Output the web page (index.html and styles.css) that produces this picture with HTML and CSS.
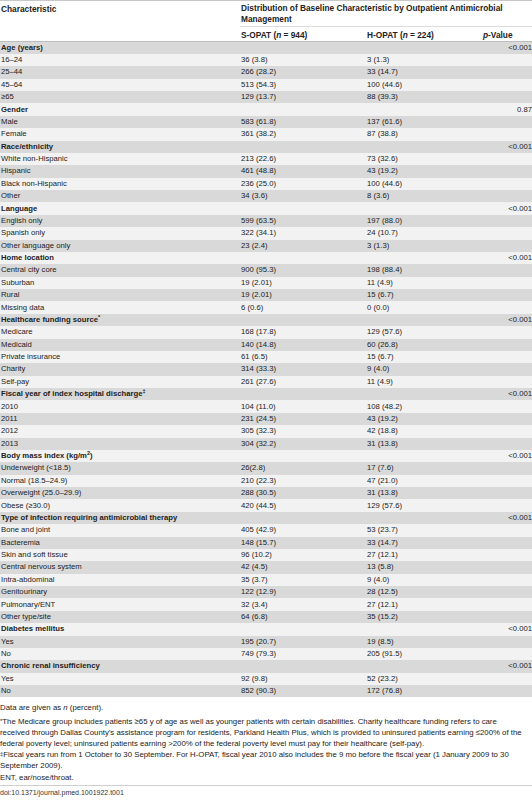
FILE: index.html
```html
<!DOCTYPE html>
<html lang="en">
<head>
    <meta charset="UTF-8">
    <meta name="viewport" content="width=device-width, initial-scale=1.0">
    <title>Table 1. Baseline characteristics</title>
    <link rel="stylesheet" href="styles.css">
</head>
<body>
    <div class="table-wrap">
        <table class="data">
            <thead>
                <tr class="head-top">
                    <th rowspan="2" class="char-col">Characteristic</th>
                    <th colspan="3" class="span-head">Distribution of Baseline Characteristic by Outpatient Antimicrobial Management</th>
                </tr>
                <tr class="head-sub">
                    <th class="num-col">S-OPAT (<i>n</i> = 944)</th>
                    <th class="num-col2">H-OPAT (<i>n</i> = 224)</th>
                    <th class="p-col"><i>p</i>-Value</th>
                </tr>
            </thead>
            <tbody>
                <tr class="group"><td>Age (years)</td><td></td><td></td><td class="p">&lt;0.001</td></tr>
                <tr><td>16–24</td><td>36 (3.8)</td><td>3 (1.3)</td><td></td></tr>
                <tr><td>25–44</td><td>266 (28.2)</td><td>33 (14.7)</td><td></td></tr>
                <tr><td>45–64</td><td>513 (54.3)</td><td>100 (44.6)</td><td></td></tr>
                <tr><td>≥65</td><td>129 (13.7)</td><td>88 (39.3)</td><td></td></tr>

                <tr class="group"><td>Gender</td><td></td><td></td><td class="p">0.87</td></tr>
                <tr><td>Male</td><td>583 (61.8)</td><td>137 (61.6)</td><td></td></tr>
                <tr><td>Female</td><td>361 (38.2)</td><td>87 (38.8)</td><td></td></tr>

                <tr class="group"><td>Race/ethnicity</td><td></td><td></td><td class="p">&lt;0.001</td></tr>
                <tr><td>White non-Hispanic</td><td>213 (22.6)</td><td>73 (32.6)</td><td></td></tr>
                <tr><td>Hispanic</td><td>461 (48.8)</td><td>43 (19.2)</td><td></td></tr>
                <tr><td>Black non-Hispanic</td><td>236 (25.0)</td><td>100 (44.6)</td><td></td></tr>
                <tr><td>Other</td><td>34 (3.6)</td><td>8 (3.6)</td><td></td></tr>

                <tr class="group"><td>Language</td><td></td><td></td><td class="p">&lt;0.001</td></tr>
                <tr><td>English only</td><td>599 (63.5)</td><td>197 (88.0)</td><td></td></tr>
                <tr><td>Spanish only</td><td>322 (34.1)</td><td>24 (10.7)</td><td></td></tr>
                <tr><td>Other language only</td><td>23 (2.4)</td><td>3 (1.3)</td><td></td></tr>

                <tr class="group"><td>Home location</td><td></td><td></td><td class="p">&lt;0.001</td></tr>
                <tr><td>Central city core</td><td>900 (95.3)</td><td>198 (88.4)</td><td></td></tr>
                <tr><td>Suburban</td><td>19 (2.01)</td><td>11 (4.9)</td><td></td></tr>
                <tr><td>Rural</td><td>19 (2.01)</td><td>15 (6.7)</td><td></td></tr>
                <tr><td>Missing data</td><td>6 (0.6)</td><td>0 (0.0)</td><td></td></tr>

                <tr class="group"><td>Healthcare funding source<sup>*</sup></td><td></td><td></td><td class="p">&lt;0.001</td></tr>
                <tr><td>Medicare</td><td>168 (17.8)</td><td>129 (57.6)</td><td></td></tr>
                <tr><td>Medicaid</td><td>140 (14.8)</td><td>60 (26.8)</td><td></td></tr>
                <tr><td>Private insurance</td><td>61 (6.5)</td><td>15 (6.7)</td><td></td></tr>
                <tr><td>Charity</td><td>314 (33.3)</td><td>9 (4.0)</td><td></td></tr>
                <tr><td>Self-pay</td><td>261 (27.6)</td><td>11 (4.9)</td><td></td></tr>

                <tr class="group"><td>Fiscal year of index hospital discharge<sup>‡</sup></td><td></td><td></td><td class="p">&lt;0.001</td></tr>
                <tr><td>2010</td><td>104 (11.0)</td><td>108 (48.2)</td><td></td></tr>
                <tr><td>2011</td><td>231 (24.5)</td><td>43 (19.2)</td><td></td></tr>
                <tr><td>2012</td><td>305 (32.3)</td><td>42 (18.8)</td><td></td></tr>
                <tr><td>2013</td><td>304 (32.2)</td><td>31 (13.8)</td><td></td></tr>

                <tr class="group"><td>Body mass index (kg/m<sup>2</sup>)</td><td></td><td></td><td class="p">&lt;0.001</td></tr>
                <tr><td>Underweight (&lt;18.5)</td><td>26(2.8)</td><td>17 (7.6)</td><td></td></tr>
                <tr><td>Normal (18.5–24.9)</td><td>210 (22.3)</td><td>47 (21.0)</td><td></td></tr>
                <tr><td>Overweight (25.0–29.9)</td><td>288 (30.5)</td><td>31 (13.8)</td><td></td></tr>
                <tr><td>Obese (≥30.0)</td><td>420 (44.5)</td><td>129 (57.6)</td><td></td></tr>

                <tr class="group"><td>Type of infection requiring antimicrobial therapy</td><td></td><td></td><td class="p">&lt;0.001</td></tr>
                <tr><td>Bone and joint</td><td>405 (42.9)</td><td>53 (23.7)</td><td></td></tr>
                <tr><td>Bacteremia</td><td>148 (15.7)</td><td>33 (14.7)</td><td></td></tr>
                <tr><td>Skin and soft tissue</td><td>96 (10.2)</td><td>27 (12.1)</td><td></td></tr>
                <tr><td>Central nervous system</td><td>42 (4.5)</td><td>13 (5.8)</td><td></td></tr>
                <tr><td>Intra-abdominal</td><td>35 (3.7)</td><td>9 (4.0)</td><td></td></tr>
                <tr><td>Genitourinary</td><td>122 (12.9)</td><td>28 (12.5)</td><td></td></tr>
                <tr><td>Pulmonary/ENT</td><td>32 (3.4)</td><td>27 (12.1)</td><td></td></tr>
                <tr><td>Other type/site</td><td>64 (6.8)</td><td>35 (15.2)</td><td></td></tr>

                <tr class="group"><td>Diabetes mellitus</td><td></td><td></td><td class="p">&lt;0.001</td></tr>
                <tr><td>Yes</td><td>195 (20.7)</td><td>19 (8.5)</td><td></td></tr>
                <tr><td>No</td><td>749 (79.3)</td><td>205 (91.5)</td><td></td></tr>

                <tr class="group"><td>Chronic renal insufficiency</td><td></td><td></td><td class="p">&lt;0.001</td></tr>
                <tr><td>Yes</td><td>92 (9.8)</td><td>52 (23.2)</td><td></td></tr>
                <tr><td>No</td><td>852 (90.3)</td><td>172 (76.8)</td><td></td></tr>
            </tbody>
        </table>
    </div>

    <div class="notes">
        <p class="first">Data are given as <i>n</i> (percent).</p>
        <p><span class="mark">*</span>The Medicare group includes patients ≥65 y of age as well as younger patients with certain disabilities. Charity healthcare funding refers to care received through Dallas County’s assistance program for residents, Parkland Health Plus, which is provided to uninsured patients earning ≤200% of the federal poverty level; uninsured patients earning &gt;200% of the federal poverty level must pay for their healthcare (self-pay).</p>
        <p><span class="mark">‡</span>Fiscal years run from 1 October to 30 September. For H-OPAT, fiscal year 2010 also includes the 9 mo before the fiscal year (1 January 2009 to 30 September 2009).</p>
        <p>ENT, ear/nose/throat.</p>
    </div>

    <div class="doi">doi:10.1371/journal.pmed.1001922.t001</div>
</body>
</html>
```

FILE: styles.css
```css
body {
    margin: 0;
    font-family: "Liberation Sans", Arial, sans-serif;
    font-size: 7.7px;
    color: #222;
    background: #fff;
}
.table-wrap {
    width: 532px;
    overflow: hidden;
}
.data {
    border-collapse: collapse;
    width: 534px;
    border-top: 1px solid #c8c8c8;
}
.data th,
.data td {
    padding: 0 0 0 1px;
    text-align: left;
    white-space: nowrap;
}
.data th {
    font-size: 8.3px;
    font-weight: bold;
    vertical-align: top;
}
.char-col {
    width: 239px;
    padding-top: 3px !important;
}
.span-head {
    white-space: normal !important;
    line-height: 11px;
    padding: 2px 28px 1px 1px !important;
    border-bottom: 1px solid #dcdcdc;
}
.head-top {
    height: 24px;
}
.head-sub {
    height: 15px;
    border-bottom: 1px solid #bdbdbd;
}
.head-sub th {
    vertical-align: middle;
    padding-top: 2px;
}
.num-col {
    width: 125px;
}
.num-col2 {
    width: 115px;
}
.p-col,
.data td.p {
    text-align: right;
    padding-right: 2px;
}
.p-col i {
    font-weight: bold;
}
.data tbody tr {
    height: 12.38px;
}
.data tbody td {
    line-height: 10px;
    vertical-align: middle;
}
.data tbody tr:nth-child(odd) {
    background: #d9d9d9;
}
.data tbody tr:nth-child(even) {
    background: #f2f2f2;
}
.group td:first-child {
    font-weight: bold;
}
sup {
    font-size: 5.5px;
    line-height: 0;
    vertical-align: 3px;
}
.notes {
    padding: 5px 0 2px 0;
    width: 528px;
    font-size: 7.8px;
    line-height: 11.2px;
}
.notes p {
    margin: 0;
}
.notes .first {
    margin-bottom: 2px;
}
.notes .mark {
    font-size: 6px;
    line-height: 0;
    vertical-align: 1.5px;
}
.doi {
    border-top: 1px solid #cfcfcf;
    padding-top: 2px;
    font-size: 7px;
    line-height: 9px;
    color: #333;
}
```
